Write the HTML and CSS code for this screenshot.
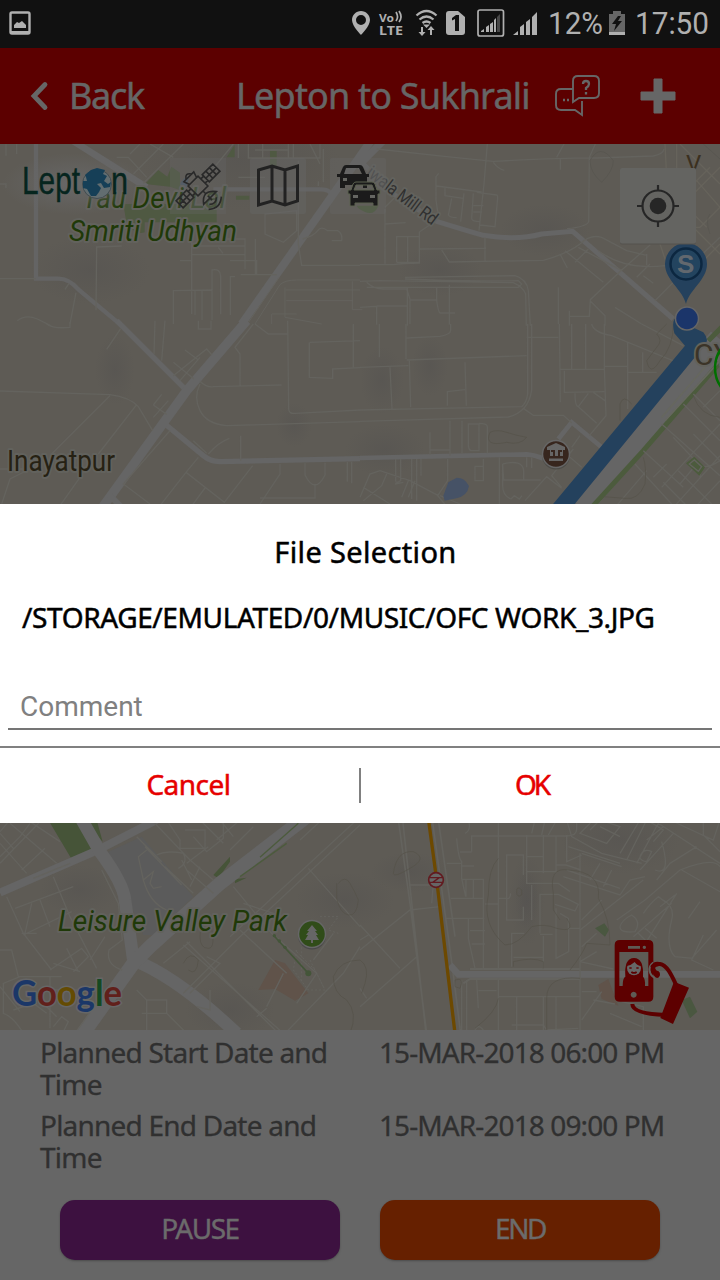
FILE: index.html
```html
<!DOCTYPE html>
<html lang="en">
<head>
<meta charset="utf-8">
<title>Lepton to Sukhrali</title>
<link rel="stylesheet" href="styles.css">
</head>
<body>
<div class="screen">
  <div class="statusbar">
    <svg class="status-icons" viewBox="0 0 720 48" width="720" height="48">
      <rect x="10.5" y="12.5" width="19" height="21" rx="1.5" fill="none" stroke="#b0b0b0" stroke-width="2.4"/>
      <path d="M10 31h20v3H10zM14 28v-3l3-3 2 1 3-2 4 4v3z" fill="#b0b0b0"/>
      <g fill="#b0b0b0">
        <path fill-rule="evenodd" d="M361 11c-5 0-9 4-9 9 0 6 9 15 9 15s9-9 9-15c0-5-4-9-9-9zm0 4a5 5 0 1 1 0 10 5 5 0 0 1 0-10z"/>
        <text class="tiny" x="379" y="21.500" textLength="15" lengthAdjust="spacingAndGlyphs">Vo</text>
        <text class="tiny lte" x="379" y="35" textLength="24" lengthAdjust="spacingAndGlyphs">LTE</text>
        <path d="M446 14q0-3 3-3h9l7 6v15q0 3-3 3h-13q-3 0-3-3z"/>
        <path d="M481 32v-1l3-2v3zM486 32v-5l3-2v7zM490 32v-8l3-2v10zM494 32V20l2-2v14z"/>
        <path d="M497 32V17l3-3v18z" opacity=".35"/>
        <path d="M513 35l5-4v4zM520 35v-8l4-3v11zM526 35V22l4-3v16zM532 35V17l5-5v23z"/>
      </g>
      <g fill="none" stroke="#b0b0b0" stroke-width="1.7">
        <path d="M396 12q3 5 0 9M399 11q4 6 0 11"/>
        <path stroke-width="2.300" d="M416.500 15.500q10-9 20 0M419.500 19.500q7-6 14 0M422.500 23q4-3 8 0"/>
        <rect x="478" y="10" width="25.500" height="26" rx="2"/>
      </g>
      <path d="M423 24.500h7l-3.500 3.500zM421 27h2v5h2.500l-3.500 4-3.500-4h2.500zM430 35v-5h-2.500l3.500-4 3.500 4H432v5z" fill="#b0b0b0"/>
      <path d="M452 18l4-3h3v16h-4V19l-3 1.500z" fill="#111"/>
      <text class="clock" x="548" y="34" textLength="55" lengthAdjust="spacingAndGlyphs">12%</text>
      <path d="M609 14h4v-3h8v3h4v18h-16z" fill="#666"/><path d="M609 32h16v3h-16z" fill="#b0b0b0"/>
      <path d="M618 16l-6 8h4l-2 7 8-10h-4l3-5z" fill="#111"/>
      <text class="clock" x="635" y="34" textLength="74" lengthAdjust="spacingAndGlyphs">17:50</text>
    </svg>
  </div>
  <header class="appbar">
    <svg class="back-icon" viewBox="0 0 20 30" width="20" height="30"><path d="M16 3.500L5 15 16 26.500" fill="none" stroke="#666" stroke-width="4.800" stroke-linecap="round"/></svg>
    <span class="back">Back</span>
    <span class="route">Lepton to Sukhrali</span>
    <svg class="chat-icon" viewBox="0 0 46 42" width="46" height="42" fill="none" stroke="#666" stroke-width="1.900">
      <path d="M18 14H6q-5 0-5 5v11q0 5 5 5h14l7 5V26"/>
      <path d="M18 27V6q0-5 5-5h16q5 0 5 5v12q0 5-5 5H24z"/>
      <path d="M28 9q0-3 3-3t3 3q0 2-3 4v2M31 17v2.500M8 25h2M12 25h2" stroke-width="2.300"/>
    </svg>
    <svg class="plus-icon" viewBox="0 0 36 36" width="36" height="36"><path d="M14 1h8v13h13v8H22v13h-8V22H1v-8h13z" fill="#666" stroke="#666" stroke-linejoin="round"/></svg>
  </header>
  <main class="map">
    <svg viewBox="0 144 720 886" width="720" height="886">
      <defs>
        <radialGradient id="hill"><stop offset="0" stop-color="#545250" stop-opacity=".5"/><stop offset="1" stop-color="#545250" stop-opacity="0"/></radialGradient>
        <radialGradient id="glow"><stop offset="0" stop-color="#686868"/><stop offset="1" stop-color="#666" stop-opacity="0"/></radialGradient>
      </defs>
      <rect y="144" width="720" height="886" fill="#5e5b55"/>
      <g fill="url(#hill)">
        <ellipse cx="90" cy="270" rx="60" ry="34"/><ellipse cx="240" cy="160" rx="100" ry="50"/><ellipse cx="115" cy="370" rx="20" ry="35"/>
        <ellipse cx="382" cy="380" rx="22" ry="34"/><ellipse cx="440" cy="270" rx="42" ry="26"/><ellipse cx="545" cy="230" rx="45" ry="26"/>
        <ellipse cx="430" cy="366" rx="18" ry="30"/><ellipse cx="385" cy="450" rx="40" ry="26"/><ellipse cx="294" cy="425" rx="18" ry="22"/>
        <ellipse cx="527" cy="900" rx="18" ry="46"/><ellipse cx="527" cy="900" rx="12" ry="30"/><ellipse cx="410" cy="872" rx="40" ry="20"/>
        <ellipse cx="230" cy="1010" rx="45" ry="28"/><ellipse cx="345" cy="900" rx="50" ry="28"/><ellipse cx="80" cy="890" rx="40" ry="25"/><ellipse cx="620" cy="840" rx="60" ry="34"/>
      </g>

      <!-- north-west tile -->
      <g transform="translate(0 144) scale(.33333)" fill="none" stroke="#64635e" stroke-width="4">
        <path d="M435 120l40-42 27 20 12-30 26 18v52l-30-10zM370 180h280v55l-216 0v30q-30 10-55-30zM810 20h20v50h-20zM680 40l24-38v38zM708 155h40v12h-40z" fill="#4f5942" stroke="none"/>
        <path d="M540 120q10-20 28-24l-10 38z" fill="#4c5a67" stroke="none"/>
        <path d="M170-40L440 130" stroke-width="20" stroke="#666"/>
        <path d="M108-20V404H175q32 0 60 32L365 545" stroke-width="13" stroke="#646464"/>
        <path d="M640 136H960q35 0 35 22" stroke-width="13" stroke="#646464"/>
        <path d="M1120-20L725 540" stroke-width="24" stroke="#656565"/>
        <path d="M0 404H108M0 120h18v12M18 0v35M50 0v30M195 436l12-18M228 446l-18 94M52 530q25-20 60-5l40 20M365 306l-75 3-2 190M430 118L550 0M520 40L450 0M350 40l35 0 55 60M400 90L490 0M390 30L420 0"/>
        <path d="M575 290v220M575 306h160v70M575 332h160M540 350h35M690 350h80v40M735 285v20l0-20h-60M655 310l14 18M766 285v105M606 438v90M585 438v75M520 540V440l116-2v90M636 438V378q25-5 26 18v115M705 398h-14v115M722 392h108"/>
        <path d="M700 0L635 80M715 0v42M745 0v42h215V0M765 18h100M788 0v40M880 0v42M930 0l30 60M865 0v42M715 100h80M970 15v100M955 112v14M795 210v60l55 25 40-35V200zM895 50v250l10 64h175M908 285q35-10 45-25t30 0h30q15 8 12 30h-30"/>
        <path d="M765 540l75-118q15-14 50-14h190M742 540l95-140M857 438h223M859 470h200M855 430v90l110 20M1057 412v85h30M815 540v-30h75" stroke-width="3"/>
      </g>
      <!-- north-east tile -->
      <g transform="translate(360 144) scale(.33333)" fill="none" stroke="#64635e" stroke-width="4">
        <path d="M-10 185h65q-15 40-60 8z" fill="#4c5b3d" stroke="none"/>
        <path d="M-10 70L80-20" stroke-width="22" stroke="#656565"/>
        <path d="M0 50L100 150 230 232Q320 260 370 274 470 290 545 270L638 262 940 525" stroke-width="15" stroke="#656565"/>
        <path d="M50 15L260 38 400 52Q640 40 710 42L880 36Q910 30 912 15M382 0l-10 120-15 140M400 55q15 20 33 24M612 0l-22 40M601 42v35M706 0L688 40 686 234q-10 15-65 20M236 88l-8 10v70l5 35M230 126l135 18M255 130v25l55 8M275 163l-10 50q5 8 25 8M312 148l-10 85M340 148l-5 75q0 10 25 10M340 185h30M340 204h26M350 145l60 8q3 0 3 10l-8 85-45-5"/>
        <path d="M75 195v165M105 160l-30 30M75 240l62-4M110 355V278h68v77h-68M143 280v76M222 234l-44 30v90M180 315l198-2M245 318l23 36 282-5Q620 330 660 300 690 270 725 280l75 40 60 14M375 280v70M0 362h100q30-5 80-5"/>
        <path d="M0 412l60-2 400 6Q490 430 497 450l2 95M135 400l330-5Q500 405 505 440l6 105M135 405q170 8 340 5l10 10-10 10H20M20 415q20 20 50 20h70l10 30v75M50 486h90M0 490l50-3v55M142 430v115M150 468h80v-40M230 470q5 35 10 37h45M268 422v120M595 430v110M628 500v45M628 517h60l3-50 90-85 90-80M600 330l22 42M615 320l115 95M645 355l40-40M690 470l45 45v30M765 490l80 50M655 310L785 380M860 330v34M715 320q80 60 200 45L940 390M830 400l40-40M850 395l30 23M885 470l80-80 115-110"/>
        <path d="M915 0l5 100M950 0v110M915 80q15 20 60 18M1010 110l70 80M980 190l60 60M930 130h60l60-60M1000 150l80-80M960 0l120 120M950 200l130 130M940 250h80l60-60M900 300l20 60M1000 380l80-80M860 235l80 50" stroke="#66635b"/>
        <path d="M690 50q30-55 70 0 0 30-35 65-35-30-35-65M1030 0l50 45M1050 210q-15 20 0 60" stroke="#56544e" stroke-width="2"/>
      </g>
      <!-- west tile -->
      <g transform="translate(0 324) scale(.33333)" fill="none" stroke="#64635e" stroke-width="4">
        <path d="M350-10L560 200M495 300L610 395Q630 412 660 413L1080 404" stroke-width="16" stroke="#656565"/>
        <path d="M740-10L560 200 300 560" stroke-width="28" stroke="#656565"/>
        <path d="M330 515l50 50" stroke-width="18" stroke="#656565"/>
        <path d="M0 201L330 212Q390 220 415 248L458 320M330 215L155 390M410 242L295 390M320 76l42-62M465-10l-3 100M495-10l-10 120M140 0q20 15 70 10V-5M595-10v25h38v-25M0 435h90L30 465 5 540M240 460L180 545"/>
        <path d="M760 0L705 70l15 20v95M765 0q20 15 40 30h60M600 172q20 20 40 16l205-5M600 180q-20 40 0 80t80 45l400-12M863-10l3 265q0 15 20 13l195-10M930 55l150-5M928 55v105l70 3v-28l82-4M1060 0v130M520 115l62 50M520 155l100-80 16 18M555 78l40 30M540 170l60-70M460 280l45-50M460 243l40 28M460 243l25-32M580 350l40 38M625 390q30-35 63-47M722 335v75M510 320L370 480l80 60M595 400l-37 45 115 90 85-110M558 445L480 545M615 492l-37 50M840 420v30l-60 90M780 522h165V480M915 418v35q30 60 60 0v-37M1042 413v60M1055 413v65"/>
      </g>
      <!-- east tile -->
      <g transform="translate(360 324) scale(.33333)" fill="none" stroke="#64635e" stroke-width="4">
        <path d="M0 402L500 391Q530 394 550 404M595 345L635 295 725 370" stroke-width="14" stroke="#656565"/>
        <path d="M655 545L1085 50" stroke-width="85" stroke="#656565"/>
        <path d="M1085 10L1045 50M700 545L850 380 1080 115" stroke="#4c5b3d" stroke-width="15"/>
        <path d="M915 290L1080 110M905 280L1060 100" stroke="#66675f" stroke-width="5"/>
        <path d="M58 0v100M138 0v105M140 42l100-5q32-5 32-18V0M140 108L500 95M0 130l145-5M148 110l4 140M90 130l6 124M315 115l4 130M262 245v-42l53-6M0 258l485-10Q500 235 503 210V0M0 292l445-13q60-15 70-80V0M500 40h95M490 253l30 21h90l25 22M598 0l3 235M635 0v135M677 0v135M600 136h135M613 140v65l120-2M645 208q0 40 10 40l30-40M655 248l55 50M733 0v130l5 145-50 60M700 205l35 25M735 127h70M695 0q5 25 60 35L975 125M845 0l125 65M803 55v200M805 145h85M848 85v60"/>
        <path d="M210 325v68M210 378h60M270 290v105M306 290v100M325 300h32v80h-25q-8-5-7-20zM357 298q25 0 25 10v80M107 405v65q0 10 15 0v-65M155 405v120M170 405v125M183 405v50M263 405v65l-30 45 25 30M370 405v65h-25v-43h25M418 400v145M428 420q60-15 63 20v28h-60l-3-48v65q0 30 25 40l10-10 15 10 8-10M432 468h110M500 400v30M515 400v32M495 530l65-72 45 35M605 490l-30-35 65-80M630 400l35 30M635 370l25-35M0 520l30-70 30-10 90 30 85 45M80 450l-15 35-55 45M10 490l80 50M105 480l25-5M125 520l20-50M145 520l20-50M240 515l60 25"/>
        <path d="M905 300L1080 455M825 420l110 120M850 380l120 110M940 340l75 80q20 20 65-10M1000 330l80 80M970 240l110 110M1000 210l80 80M880 460l40-40M905 490l100-110 75-80M945 545l135-150M1010 545l70-75M860 440l-90 105M910 475l70 70M955 440l100 100M1040 370l50 50M1010 420l-50 60M1020 450v10M1030 250l50-50"/>
        <path d="M390 325q20-10 50 0t60 15q-20 25-60 15-70 15-50-30M940 0q0 70-40 110-30 50-40 0l30-40q20-20 0-40l30-30M780 290V240q10-30 35 0M1000 215q20 60 80 65M850 400q10 30 5 80-20 50-60 43l-65-5" stroke="#555149" stroke-width="2"/>
        <path d="M250 515l15-40 25-14q25 0 37 25-5 30-38 37l-35 7z" fill="#465266" stroke="none"/>
        <path d="M978 418l25-20 32 32-17 25z" fill="#4c5b3d" stroke="none"/><path d="M988 420l15-12 22 20-10 14z"/>
        <path d="M575 545L975 65 943 28Q936 0 943-15L1030 25Q1050 50 1033 65L640 545z" fill="#24415d" stroke="none"/>
      </g>
      <!-- south-west tile -->
      <g transform="translate(0 820) scale(.33333)" fill="none" stroke="#64635e" stroke-width="4">
        <path d="M145 0h90l40 90-60 28zM250 0h40l18 65zM640 165l50-55v15l-35 50zM705 190v-12l35-5z" fill="#465438" stroke="none"/>
        <path d="M325 95L425 50 580 230 460 345H430Z" fill="#5b5b5b" stroke="none"/>
        <path d="M775 510l50-90 30 10 70 90-40 22-60-35z" fill="#60534a" stroke="none"/>
        <path d="M0 218L290 92 470 0" stroke-width="24" stroke="#656565"/>
        <path d="M240-10L300 95Q370 190 375 240L400 420Q530 470 710 640" stroke-width="38" stroke="#656565"/>
        <path d="M920-10L660 190 450 380 400 430 250 640" stroke-width="42" stroke="#656565"/>
        <path d="M895 10L780 112M860 70L720 170" stroke="#4c5b3d"/>
        <path d="M0 130L120 5M30 10l140 120M0 70l80 90M0 40l40 45M30 0L0 35M65 150l70-65M90 10L60 50 0 110M100 175l110-45M90 5l90 60M160 170l50 120 80 155M20 230l50 110 85 110M45 265l175-65M70 345l145-70M120 240l30 80M65 340h45M75 340l20-90M150 450l95-65 20 25-45 45M160 430l80 25M200 385l35 70M270 420l45-70M305 150l50 100 12 110-40 30q-10 45 40 60M0 390h35l20 80h130M60 470l-50 20v90q30 10 60 60M60 470h90v155M150 510h80l45 60-50 70M0 500l60 75M110 530l60 60M160 620l25-30 20 15-15 30M40 570l60-20 40 30"/>
        <path d="M440 90l-25 20 15 70q20 70 70 90M435 80l110 115M410 50l75 75M430 180l30-25-10 35 10 15 25-5M470 105q30-15 80-5 15 30-15 45M495 140l85 80M545 120l30 60M455 0L570 120l70 60M500 0l40 60v25h75V30h-60M560 130l65-50M560 150l80 70M600 140l-30 60M580 50l40 45 50-40V0M600 0l70 70M660 0l40 50M720 0l-70 60M760 20l-70 70"/>
        <path d="M1080 15L720 350 550 520M1070 0L690 350M925 145l155 175M965 0l-65 60M700 200l115 140 135 120-60 90M1080 380l-50 80-170 175M560 365l270 270M550 375L850 640M720 330L860 460M620 410l40 20-90 90M730 250l120 40M490 430l80-65M410 510l30 30v100M440 540h60v40h-75M500 580l60 60M630 510v60l-40-10M770 590l30-25M850 460L800 560M1000 340l-60 80" />
        <path d="M1015 190q20-25 35 0t25 50q-5 50-30 45t-35-50V190M1080 420q-60 0-80 50 0 50 40 70 35 40 10 100M600 350q0-60 30-45 20 80-5 80t-25-35M550 430q20-40 45-10-5 50-30 30" stroke="#555149" stroke-width="2"/>
        <path d="M960 290l55 0-30 40 30 10M890 390l-10 60 45 60h50l-30-60-60-60M905 370v120M930 420l40 80" stroke-dasharray="6 6" stroke-width="3"/>
        <path d="M820 345l105 115" stroke="#445539" stroke-width="5"/><g fill="#445539" stroke="none"><circle cx="823" cy="347" r="5"/><circle cx="838" cy="363" r="5"/><circle cx="855" cy="382" r="5"/><circle cx="925" cy="460" r="9"/></g>
      </g>
      <!-- south-east tile -->
      <g transform="translate(360 820) scale(.33333)" fill="none" stroke="#64635e" stroke-width="4">
        <path d="M705 325l28-15 14 20-12 20zM965 540l25-10 22 45-22 20z" fill="#4a5740" stroke="none"/>
        <path d="M715 495l30-18 30 80-50-20z" fill="#60534a" stroke="none"/>
        <path d="M115 0l35 250 50 390M128 0l70 640M217 0l60 440 25 200" stroke-width="5"/>
        <path d="M235 0l50 350" stroke-width="5"/>
        <path d="M270 435l25 28H1080" stroke-width="20" stroke="#656565"/>
        <path d="M310 490l20-13H660M330 447h330" stroke-width="6"/>
        <path d="M0 315l120 130M0 560l170-150M0 505l20 30M0 360l25-15M0 390l150-120 90-10M150 195h70M220 190l-5 60"/>
        <path d="M325 0q10 30-10 40M335 95V48h285q30 0 30-20V0M300 96h35M290 55q5 60 15 70v50l12 55M260 130h45M305 138h37M305 178h65v270M272 235h100M340 180v55M318 180v50M255 295h118M325 295v60l20 90M330 332h45M335 372h40M415 0v450M440 235V105h50v60M500 45v145h95l35 25M500 190v-95M550 45v115M500 110h50M500 155h90M588 48v110M620 45v80l45-20M588 135h30l45 15M660 100v540M415 235h25v65h50v-40M440 235q10 5 12-15M375 252h40M490 262v35M540 340V223h55l60 30-10 20-60-20M540 343h38M455 440V340h38M460 412h90V348M588 265v150l38-20V325M600 280l25 15v30h35M550 410v38M515 195v105" stroke-width="4"/>
        <path d="M350 480l5 85M355 512h55M305 480v160M320 480v160M415 475v165M415 530h245M470 530v110M550 530v110M588 530v110M455 615h95l10 15 95-5M665 515h45M665 600l60-85M345 630q10-20 25 0M660 425l100 22M785 545l65 15v80M700 540l65 12M750 580l95 40"/>
        <path d="M525 0l-10 40M555 0l-10 45M590 0l-25 45M620 0l15 50 90 50 120 30M625 80L780 130M610 170L780 225l30-45 45-10M620 150l160 55M690 180l30-50M730 200l25-50M665 100l120 40M700 0l-40 40 80 30 40-50-60-20-30 30M720 20l60 30M780 100l60-100M800 120l60-120M830 130l70-130M860 60l50-40M860 0l50 30-30 35M845 100q10-15 30-5l-15 30q-30-5-15-25M840 150l100-110M880 0l200 130M885 150q50 20 20-85M890 180l40-50 80-50M965 150l115 65M850 180L660 330M930 0l130 60 20-60M1030 0v45l50 50M770 300L855 240 960 150Q1060 110 1080 140M900 260l45-35M780 320q5-20 35-35 30 20 10 50-45 5-45-15M850 280q20-30 45-50l20 15M820 350l115-100M850 380l100-160M835 340l35 35M855 325l35 30M910 240q35 20 25 60-20 80 10 110l55 5M1020 245l-35 50M1030 345l-35 75 65 30M665 300l60-60M665 380l45-40M660 425l50-30M1000 410l70-80" />
        <path d="M100 160q10-70 60-65 45 20-10 50-50 30-50 15M415 115q-30 30-30 110-20 90 50 150 40 0 80-55 40-10 75 5 60 15 30-30M630 450q40-50 50-80l70 5q0-80-35-140 10-80-90-85-60-10-45 70v50l20 30M470 215q0-20 15-5v15q-15 10-15-10M0 420q30 20 15 70l-10 30M415 535q-5 40-70 90M660 475q-100-10-100 60v100M285 480q30-10 15 25l-15-5zM460 440v-15q60-15 90 0v20" stroke="#555149" stroke-width="2"/>
        <path d="M205-5l25 185 55 460" stroke="#6d4900" stroke-width="10"/>
        <circle cx="228" cy="180" r="22" fill="#666" stroke="#611b20" stroke-width="5"/><path d="M208 173h40M208 187h40M218 187l20-14" stroke="#611b20"/>
      </g>

      <g class="map-label park">
        <text x="82" y="208" textLength="144" lengthAdjust="spacingAndGlyphs">Tau Devi<tspan fill="#3d4d2e"> Lal</tspan></text>
        <text x="69" y="241" textLength="168" lengthAdjust="spacingAndGlyphs">Smriti Udhyan</text>
        <text x="58" y="931" textLength="229" lengthAdjust="spacingAndGlyphs">Leisure Valley Park</text>
      </g>
      <text class="map-label place" x="7" y="471" textLength="108" lengthAdjust="spacingAndGlyphs">Inayatpur</text>
      <text class="map-label road" x="0" y="0" transform="translate(365 175) rotate(37)" textLength="84" lengthAdjust="spacingAndGlyphs"><tspan fill="#484848">iwa</tspan>la Mill Rd</text>
      <text class="map-label district" x="694" y="365">CY</text>
      <text class="map-label letter" x="686" y="172">V</text>
      <ellipse cx="742" cy="368" rx="27" ry="30" fill="none" stroke="#006f00" stroke-width="2.500"/>

      <!-- poi badges -->
      <circle cx="556" cy="455.500" r="14" fill="#4d4c48"/><circle cx="556" cy="454" r="13.500" fill="#37261e" stroke="#666" stroke-width="1.500"/>
      <path d="M547 449v-2l9-4 9 4v3h-2v6h-3v-4h2v-2h-4v6h-3v-6h-4v2h2v4h-3v-6h-3zM549 458.500h14v2.500h-14z" fill="#666"/>
      <circle cx="312" cy="935.500" r="14" fill="#494949"/><circle cx="312" cy="934" r="13.500" fill="#304c19" stroke="#666" stroke-width="1.500"/>
      <path d="M312 925l5 6h-2l3 4h-2l3 5h-6v3h-2v-3h-6l3-5h-2l3-4h-2z" fill="#666"/>
      <path d="M686 304c-3-14-21-24-21-40a21 21 0 0 1 42 0c0 16-18 26-21 40z" fill="#24415d"/>
      <circle cx="686" cy="264" r="15.500" fill="#23445f" stroke="#0c2740" stroke-width="2.500"/><text class="pin-letter" x="677" y="273">S</text>
      <circle cx="687" cy="318.500" r="11.500" fill="#1b356a" stroke="#666" stroke-width="1.500"/>

      <!-- overlay controls -->
      <ellipse cx="75" cy="184" rx="73" ry="31" fill="url(#glow)"/>
      <text class="brand" x="22" y="194" textLength="58" lengthAdjust="spacingAndGlyphs">Lept</text>
      <circle cx="97" cy="184" r="14.500" fill="#626d70" stroke="#424c50"/>
      <path d="M85 175l6-5 6-2 8 2-2 4 4 2-3 5 4 3 3-2-1 5-6 1-3-5-4 1 4 4-2 4-3 4h-5l-4-7-4-1v-7h4l-1-4z" fill="#163f57"/>
      <text class="brand" x="111" y="194" textLength="17" lengthAdjust="spacingAndGlyphs">n</text>
      <rect x="170" y="158" width="56" height="56" fill="#666" opacity=".3"/><rect x="250" y="158" width="56" height="56" rx="2" fill="#666" opacity=".45"/><rect x="330" y="158" width="56" height="56" rx="2" fill="#666" opacity=".35"/>
      <g fill="none" stroke="#292929" stroke-width="1.600">
        <g transform="translate(198 186) rotate(-45)"><path d="M-7-7H7V7H-7zM-7-3h-4M-7 3h-4M7-3h4M7 3h4M11-5h15v10H11zM16-5V5M21-5V5M11 0h15M-26-5h15V5h-15zM-21-5V5M-16-5V5M-26 0h15M-5-7l-2-6H7l-2 6M-4-13q4-6 8 0M0 7v4M-9 17q9-12 18 0zM0 14v6M-5 21q5 5 10 0M-9 24q9 8 18 0"/></g>
        <path d="M258.500 170l13.500-4 13 4 12.500-4v35l-12.500 4-13-4-13.500 4zM272 166v36M285 170v36" stroke-width="3" stroke="#222"/>
      </g>
      <g fill="#1b1b1b">
        <path fill-rule="evenodd" d="M343 167q1-2 3-2h14q2 0 3 2l3 7h3v3h-2v11h-4v-3h-18v3h-5v-11h-3v-3h3zM346 168l-2 6h18l-3-6z"/>
        <path stroke="#5c6250" fill-rule="evenodd" d="M353 184q1-2 3-2h16q2 0 3 2l2 6h3v4h-2v12h-5v-3h-18v3h-5v-12h-2v-4h3zM356 185l-2 5h20l-2-5z"/>
      </g>
      <path d="M343 178h4v3h-4zM353 195h5v3h-5zM370 195h5v3h-5z" fill="#656662"/>
      <rect x="620" y="168.500" width="76" height="76" rx="2" fill="#55534f"/><rect x="620" y="168" width="76" height="75.500" rx="2" fill="#646461"/>
      <g fill="none" stroke="#262626" stroke-width="2.200"><circle cx="658" cy="206" r="15.500"/><path d="M658 185v6M658 221v6M637 206h6M673 206h6"/></g><circle cx="658" cy="206" r="8.300" fill="#262626"/>
      <text class="google" x="12" y="1006" textLength="110" lengthAdjust="spacingAndGlyphs"><tspan fill="#1b3768">G</tspan><tspan fill="#61201b">o</tspan><tspan fill="#644b03">o</tspan><tspan fill="#1b3768">g</tspan><tspan fill="#154922">l</tspan><tspan fill="#61201b">e</tspan></text>
      <g transform="translate(600 930) scale(.33333)">
        <path fill-rule="evenodd" fill="#5d0000" d="M60 30h85q15 0 15 15v155q0 15-15 15H60q-16 0-16-15V45q0-15 16-15zM58 66v102h87V66zM84 48v8h36v-8zM133 47a5 5 0 1 0 .1 0zM101 185a9 9 0 1 0 .1 0z"/>
        <path fill="#5d0000" d="M68 168q0-24 8-28-4-56 26-56t27 56q7 5 6 28z"/><ellipse cx="102" cy="114" rx="21" ry="22" fill="#666"/><path d="M80 108q14-2 24-12 8 12 20 12l-5-16-18-6-15 8z" fill="#5d0000"/>
        <path d="M88 114h7M109 114h7M94 126q8 6 16 0" stroke="#5d0000" stroke-width="5"/>
        <path d="M160 98q-14 10-11 26 3 14 16 20" fill="none" stroke="#62615d" stroke-width="6"/>
        <path d="M156 112q8-12 24-10c20 3 33 30 48 62M97 222c0 22 44 31 100 33" fill="none" stroke="#5d0000" stroke-width="12"/><path d="M152 108q10-16 26-12v12q-14 0-12 8 2 7 10 8 6 5 3 14-4 9-13 4-13-14-14-34zM222 155l45 18-48 109-38-18z" fill="#5d0000"/>
      </g>
    </svg>
  </main>
  <section class="details">
    <dl class="schedule">
      <dt>Planned Start Date and Time</dt><dd>15-MAR-2018 06:00 PM</dd>
      <dt>Planned End Date and Time</dt><dd>15-MAR-2018 09:00 PM</dd>
    </dl>
    <div class="actions">
      <button class="action pause">PAUSE</button>
      <button class="action end">END</button>
    </div>
  </section>
  <div class="dialog" role="dialog">
    <h2 class="dialog-title">File Selection</h2>
    <p class="file-path">/STORAGE/EMULATED/0/MUSIC/OFC WORK_3.JPG</p>
    <div class="comment">Comment</div>
    <div class="dialog-actions">
      <button class="choice cancel">Cancel</button>
      <span class="divider"></span>
      <button class="choice ok">OK</button>
    </div>
  </div>
</div>
</body>
</html>
```
FILE: styles.css
```css
* { box-sizing: border-box; }
body { margin: 0; background: #666; font-family: "Trebuchet MS", "Noto Sans", sans-serif; }
button { margin: 0; padding: 0; border: 0; font-family: inherit; background: none; }
svg { display: block; flex: none; }
.screen { position: relative; width: 720px; height: 1280px; overflow: hidden; display: flex; flex-direction: column; }
.statusbar { height: 48px; background: #111; flex: none; }
.tiny { font: bold 11px "Noto Sans", sans-serif; }
.lte { font-size: 13px; }
.clock { font: 31px Roboto, sans-serif; fill: #b0b0b0; }
.appbar { height: 96px; flex: none; display: flex; align-items: center; padding-left: 29px; background: #5c0000; color: #666; font-size: 36px; line-height: 92px; white-space: nowrap; -webkit-text-stroke: .5px #666; }
.back { width: 167px; margin-left: 20px; letter-spacing: -1.3px; }
.route { width: 319px; letter-spacing: -.8px; }
.plus-icon { margin-left: 39px; }
.map { height: 886px; flex: none; }
.map-label { font-family: Roboto, sans-serif; font-size: 29px; paint-order: stroke; stroke: #62625d; stroke-width: 4px; stroke-linejoin: round; }
.park { font-style: italic; fill: #1f3908; }
.place { fill: #262113; }
.road { font-size: 18px; fill: #303030; }
.district { font-size: 30px; fill: #3b3428; }
.letter { font-size: 24px; fill: #3b301f; stroke: none; }
.pin-letter { font: bold 26px "Liberation Sans", sans-serif; fill: #62686e; }
.brand { font: 38px "Liberation Sans", sans-serif; fill: #06251e; stroke: #06251e; stroke-width: .4px; }
.google { font: bold 36px Lato, sans-serif; paint-order: stroke; stroke: #666; stroke-width: 3px; }
.details { flex: 1; padding: 6px 40px 0; background: #666; }
.schedule { margin: 0; display: grid; grid-template-columns: 300px 300px; column-gap: 39px; row-gap: 9px; color: #303030; font-size: 28px; line-height: 32px; -webkit-text-stroke: .3px #303030; }
.schedule dt { letter-spacing: -.78px; }
.schedule dd { margin: 0; white-space: nowrap; letter-spacing: -.9px; }
.actions { display: flex; gap: 40px; padding: 27px 20px 0; }
.action { width: 280px; height: 60px; padding-bottom: 4px; border-radius: 15px; color: #6b6b6b; font-size: 28px; line-height: 56px; letter-spacing: -1.5px; -webkit-text-stroke: .4px #6b6b6b; box-shadow: 0 1px 2px #4b4b4b; }
.pause { background: #3d1140; }
.end { background: #662000; letter-spacing: -2.5px; }
.dialog { position: absolute; left: 0; top: 504px; width: 720px; height: 319px; padding-top: 28px; background: #fff; color: #000; }
.dialog-title { margin: 0; padding-left: 11px; text-align: center; font-weight: 400; font-size: 29px; line-height: 40px; letter-spacing: .35px; -webkit-text-stroke: .5px #000; }
.file-path { margin: 29px 0 0 22px; font-size: 28px; line-height: 32px; white-space: nowrap; letter-spacing: -.38px; -webkit-text-stroke: .5px #000; }
.comment { margin: 57px 8px 0; padding: 1px 12px 0; height: 40px; border-bottom: 2px solid #757575; color: #808080; font: 28px/32px Roboto, sans-serif; }
.dialog-actions { display: flex; margin-top: 16px; height: 77px; border-top: 2px solid #808080; }
.choice { flex: 1 1 0; padding-bottom: 3px; color: #e60000; font-size: 28px; line-height: 72px; letter-spacing: -.5px; -webkit-text-stroke: .5px #e60000; }
.cancel { padding-left: 18px; }
.ok { padding-right: 18px; letter-spacing: -3px; }
.divider { flex: none; width: 2px; height: 35px; margin-top: 20px; background: #808080; }
```
